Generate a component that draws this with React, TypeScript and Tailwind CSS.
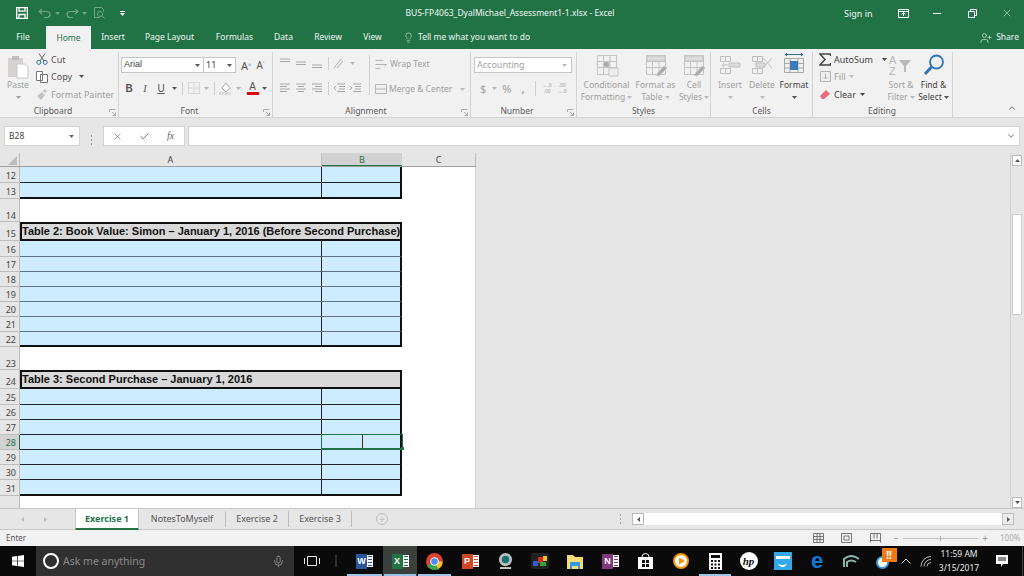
import { Check, ChevronDown, ChevronUp, Lightbulb, Mic, UserPlus, X } from "lucide-react";
import type { ReactNode } from "react";

const Caret = ({ className = "" }: { className?: string }) => (
	<svg viewBox="0 0 5 3" className={`h-[3px] w-[5px] shrink-0 ${className}`} fill="currentColor">
		<path d="M0 0h5L2.5 3z" />
	</svg>
);

const Launcher = () => (
	<svg viewBox="0 0 7 7" className="h-[7px] w-[7px] text-[#9a9a9a]" fill="none" stroke="currentColor">
		<path d="M.5 3V.5H6.5M6.5 6.5L3 3M6.5 3.5v3h-3" strokeWidth=".8" />
	</svg>
);

function Group({
	width,
	label,
	launcher,
	labelOffset,
	children,
}: {
	width: string;
	label: string;
	launcher?: boolean;
	labelOffset?: string;
	children: ReactNode;
}) {
	return (
		<div className={`flex h-[65px] shrink-0 flex-col border-r border-[#d4d4d4] ${width}`}>
			<div className="h-[54px]">{children}</div>
			<div className="relative flex h-[11px] items-center justify-center text-[8.5px] leading-none text-[#5a5a5a]">
				<span className={labelOffset}>{label}</span>
				{launcher && (
					<span className="absolute right-[2px] top-[3px]">
						<Launcher />
					</span>
				)}
			</div>
		</div>
	);
}

// big ribbon button: icon with one or two lines of text below
function BigButton({
	width,
	lines,
	dim = true,
	icon,
}: {
	width: string;
	lines: ReactNode[];
	dim?: boolean;
	icon: ReactNode;
}) {
	return (
		<div className={`flex shrink-0 flex-col items-center ${width} ${dim ? "text-[#a0a0a0]" : "text-[#444444]"}`}>
			<div className="flex h-[25px] items-center justify-center">{icon}</div>
			<div className="mt-[2px] flex h-[12px] items-center gap-[2px] whitespace-nowrap text-[8.5px] leading-none">{lines[0]}</div>
			<div className="flex h-[12px] items-center gap-[2px] whitespace-nowrap text-[8.5px] leading-none">{lines[1]}</div>
		</div>
	);
}

const GridIcon = ({ children }: { children?: ReactNode }) => (
	<svg viewBox="0 0 24 24" className="h-[24px] w-[24px]" fill="none" stroke="#c4c4c4">
		<path d="M2.5 2.5h19v19h-19zM2.5 8.5h19M2.5 14.5h19M8.5 2.5v19M15 2.5v19" />
		{children}
	</svg>
);

const Lines = ({ d }: { d: string }) => (
	<svg viewBox="0 0 12 10" className="h-[10px] w-[12px] shrink-0" stroke="#a8a8a8" fill="none">
		<path d={d} />
	</svg>
);

const Sep = ({ className = "h-[15px]" }: { className?: string }) => (
	<div className={`w-px shrink-0 bg-[#d0d0d0] ${className}`} />
);

function Ribbon() {
	return (
		<div className="flex h-[69px] border-b border-[#d2d2d2] bg-[#f1f1f1] pt-[3px] font-['Noto_Sans',sans-serif]">
			{/* clipboard */}
			<Group width="w-[119px]" label="Clipboard" launcher labelOffset="mr-[12px]">
				<div className="flex">
					<div className="flex w-[36px] shrink-0 flex-col items-center text-[#a0a0a0]">
						<svg viewBox="0 0 22 24" className="mt-[3px] h-[24px] w-[22px]">
							<path d="M1 3h15v19H1z" fill="#d6d2d2" />
							<path d="M5 1h7v4H5z" fill="#bdbdbd" />
							<path d="M10 9h8l3 3v11H10z" fill="#fff" stroke="#c8c8c8" />
						</svg>
						<span className="text-[8.5px] leading-[12px]">Paste</span>
						<Caret className="mt-[5px]" />
					</div>
					<div className="-mt-[2px] flex flex-col text-[9px] leading-none">
						<div className="flex h-[18px] items-center gap-[3px] text-[#555555]">
							<svg viewBox="0 0 12 12" className="h-[12px] w-[12px]" fill="none" stroke="#2e6da4">
								<circle cx="2.8" cy="9.4" r="2" />
								<circle cx="9.2" cy="9.4" r="2" />
								<path d="M4 8L9 .5M8 8L3 .5" stroke="#666" />
							</svg>
							Cut
						</div>
						<div className="flex h-[17px] items-center gap-[3px] text-[#555555]">
							<svg viewBox="0 0 12 12" className="h-[12px] w-[12px]" fill="#fff" stroke="#777">
								<path d="M.5.5h6v9h-6zM4.5 3.5h7v8h-7z" />
							</svg>
							Copy
							<Caret className="ml-[4px]" />
						</div>
						<div className="flex h-[18px] items-center gap-[3px] text-[#a0a0a0]">
							<svg viewBox="0 0 12 12" className="h-[12px] w-[12px]" fill="#c4c4c4">
								<path d="M1 8l5-4 3 3-4 5zM7 3l2-2 2 2-2 2z" />
							</svg>
							Format Painter
						</div>
					</div>
				</div>
			</Group>

			{/* font */}
			<Group width="w-[154px]" label="Font" launcher labelOffset="mr-[12px]">
				<div className="pt-[5px]">
					<div className="flex h-[16px] items-center pl-[2px]">
						<div className="flex h-[16px] w-[83px] items-center justify-between border border-[#c6c6c6] bg-white pl-[2px] pr-[3px] font-['Liberation_Sans',sans-serif] text-[9px] text-[#444444]">
							Arial <Caret className="text-[#555]" />
						</div>
						<div className="flex h-[16px] w-[32px] items-center justify-between border border-l-0 border-[#c6c6c6] bg-white pl-[2px] pr-[3px] text-[9px] text-[#444444]">
							11 <Caret className="text-[#555]" />
						</div>
						<span className="ml-[5px] text-[11px] leading-none text-[#555]">
							A<sup className="text-[6px] text-[#2e6da4]">^</sup>
						</span>
						<span className="ml-[5px] text-[10px] leading-none text-[#555]">
							A<sup className="text-[6px] text-[#2e6da4]">˅</sup>
						</span>
					</div>
					<div className="mt-[7px] flex h-[16px] items-center text-[#555]">
						<span className="ml-[2px] w-[16px] text-center font-['Liberation_Sans',sans-serif] text-[10px] font-bold">B</span>
						<span className="w-[16px] text-center font-['Liberation_Serif',serif] text-[10px] italic">I</span>
						<span className="w-[16px] text-center font-['Liberation_Sans',sans-serif] text-[10px] underline">U</span>
						<Caret className="ml-[3px]" />
						<Sep className="ml-[5px] h-[13px]" />
						<svg viewBox="0 0 12 12" className="ml-[5px] h-[12px] w-[12px]" fill="none" stroke="#c4bcc4" strokeDasharray="1 1">
							<path d="M.5.5h11v11H.5zM6 .5v11M.5 6h11" />
						</svg>
						<Caret className="ml-[4px] text-[#bbb]" />
						<Sep className="ml-[5px] h-[13px]" />
						<svg viewBox="0 0 14 14" className="ml-[4px] h-[14px] w-[14px]">
							<path d="M3 7l4-5 4 5-4 4z" fill="#fff" stroke="#aaa" />
							<path d="M0 11h12v3H0z" fill="#dcdcdc" />
						</svg>
						<Caret className="ml-[3px] text-[#bbb]" />
						<div className="ml-[5px] flex w-[13px] flex-col items-center">
							<span className="font-['Liberation_Sans',sans-serif] text-[10px] leading-[10px]">A</span>
							<span className="h-[3px] w-[12px] bg-[#e3000f]" />
						</div>
						<Caret className="ml-[3px]" />
					</div>
				</div>
			</Group>

			{/* alignment */}
			<Group width="w-[198px]" label="Alignment" launcher labelOffset="mr-[11px]">
				<div className="flex">
					<div className="flex w-[96px] shrink-0 flex-col">
						<div className="flex h-[20px] items-center gap-[4px] pl-[6px] pt-[2px]">
							<Lines d="M1 1h10M1 3.5h10" />
							<Lines d="M1 4h10M1 6.5h10" />
							<Lines d="M1 7h10M1 9.500h10" />
							<Sep className="ml-[1px] h-[13px]" />
							<svg viewBox="0 0 12 12" className="h-[12px] w-[12px]" stroke="#b0b0b0" fill="none">
								<path d="M1 11L8 2M4 11l6-7" />
							</svg>
							<Caret className="ml-[1px] text-[#bbb]" />
						</div>
						<div className="mt-[8px] flex h-[16px] items-center gap-[4px] pl-[6px]">
							<Lines d="M1 1h10M1 3.500h7M1 6h10M1 8.500h7" />
							<Lines d="M1 1h10M3 3.500h6M1 6h10M3 8.500h6" />
							<Lines d="M1 1h10M4 3.500h7M1 6h10M4 8.500h7" />
							<Sep className="ml-[1px] h-[13px]" />
							<Lines d="M4 1h8M6 3.500h6M6 6h6M4 8.500h8M3 3L1 5l2 2" />
							<Lines d="M4 1h8M6 3.500h6M6 6h6M4 8.500h8M1 3l2 2-2 2" />
						</div>
					</div>
					<Sep className="mt-[3px] h-[40px]" />
					<div className="flex flex-col whitespace-nowrap pl-[5px] text-[8.5px] leading-none text-[#a0a0a0]">
						<div className="flex h-[20px] items-center gap-[2px] pt-[5px]">
							<svg viewBox="0 0 13 12" className="h-[12px] w-[13px] shrink-0" fill="none" stroke="#b4b4b4">
								<path d="M.5 1.500h8M.5 5.500h11l-2 2M.5 9.500h5" />
							</svg>
							Wrap Text
						</div>
						<div className="mt-[9px] flex h-[16px] items-center gap-[2px]">
							<svg viewBox="0 0 12 12" className="h-[12px] w-[12px] shrink-0" fill="none" stroke="#b4b4b4">
								<path d="M.5 1.500h11v9H.5zM.5 6h3M8.500 6h3M3.500 6h5" />
							</svg>
							Merge & Center
							<Caret className="ml-[6px] text-[#bbb]" />
						</div>
					</div>
				</div>
			</Group>

			{/* number */}
			<Group width="w-[106px]" label="Number" launcher labelOffset="mr-[13px]">
				<div className="pl-[3px] pt-[5px]">
					<div className="flex h-[16px] w-[98px] items-center justify-between border border-[#c6c6c6] bg-white pl-[2px] pr-[4px] text-[9px] text-[#a0a0a0]">
						Accounting <Caret className="text-[#bbb]" />
					</div>
					<div className="mt-[7px] flex h-[16px] items-center text-[#a0a0a0]">
						<span className="ml-[6px] text-[11px] leading-none">$</span>
						<Caret className="ml-[6px] text-[#bbb]" />
						<span className="ml-[5px] text-[11px] leading-none">%</span>
						<span className="ml-[10px] text-[11px] font-bold leading-none">,</span>
						<Sep className="ml-[10px] h-[15px]" />
						<span className="ml-[5px] w-[13px] text-center text-[5px] leading-[6px]">
							←.0
							<br />
							.00
						</span>
						<span className="ml-[2px] w-[13px] text-center text-[5px] leading-[6px]">
							.00
							<br />
							→.0
						</span>
					</div>
				</div>
			</Group>

			{/* styles */}
			<Group width="w-[134px]" label="Styles">
				<div className="flex pl-[2px]">
					<BigButton
						width="w-[55px]"
						lines={["Conditional", <>Formatting <Caret className="text-[#bbb]" /></>]}
						icon={<GridIcon><path d="M9 9h5v5H9z" fill="#a8a8a8" /><path d="M14 15h9v8h-9z" fill="#eee" /></GridIcon>}
					/>
					<BigButton
						width="w-[43px]"
						lines={["Format as", <>Table <Caret className="text-[#bbb]" /></>]}
						icon={<GridIcon><path d="M3 3h18v5H3z" fill="#ddd" /><path d="M12 22l8-9 3 2-8 8z" fill="#aaa" /></GridIcon>}
					/>
					<BigButton
						width="w-[34px]"
						lines={["Cell", <>Styles <Caret className="text-[#bbb]" /></>]}
						icon={<GridIcon><path d="M3 3h18v5H3z" fill="#ddd" /><path d="M12 22l8-9 3 2-8 8z" fill="#aaa" /></GridIcon>}
					/>
				</div>
			</Group>

			{/* cells */}
			<Group width="w-[102px]" label="Cells">
				<div className="flex pl-[3px]">
					<BigButton
						width="w-[32px]"
						lines={["Insert", <Caret className="text-[#bbb]" />]}
						icon={
							<svg viewBox="0 0 22 20" className="h-[20px] w-[22px]" fill="none" stroke="#bfbfbf">
								<path d="M1.500 1.500h10v5h-10zM1.500 13.500h10v5h-10zM6.500 1.500v5M6.500 13.500v5M3 10h6M5 8l-2 2 2 2" />
								<path d="M10 8h11v4H10z" fill="#dcdcdc" />
							</svg>
						}
					/>
					<BigButton
						width="w-[32px]"
						lines={["Delete", <Caret className="text-[#bbb]" />]}
						icon={
							<svg viewBox="0 0 22 20" className="h-[20px] w-[22px]" fill="none" stroke="#bfbfbf">
								<path d="M1.500 1.500h10v5h-10zM1.500 13.500h10v5h-10zM6.500 1.500v5M6.500 13.500v5M12 3l9 10M21 3l-9 10" />
								<path d="M5 8h9v4H5z" fill="#dcdcdc" />
							</svg>
						}
					/>
					<BigButton
						width="w-[32px]"
						dim={false}
						lines={["Format", <Caret className="text-[#555]" />]}
						icon={
							<svg viewBox="0 0 22 24" className="h-[24px] w-[22px]" fill="none" stroke="#a8a8a8">
								<path d="M1.500 5.500h19v14h-19zM1.500 10.500h19M1.500 15h19M7 5.500v14M15 5.500v14" />
								<path d="M7 8h8v9H7z" fill="#3d7ab8" stroke="none" />
								<path d="M2 1.500h18M4 0L2 1.500 4 3M18 0l2 1.500L18 3" stroke="#2e6da4" />
							</svg>
						}
					/>
				</div>
			</Group>

			{/* editing */}
			<Group width="w-[140px]" label="Editing" labelOffset="mr-[1px]">
				<div className="flex">
					<div className="-mt-[2px] flex w-[72px] shrink-0 flex-col pl-[6px] text-[9px] leading-none">
						<div className="flex h-[18px] items-center gap-[3px] text-[#444]">
							<svg viewBox="0 0 12 13" className="h-[13px] w-[12px] shrink-0" fill="none" stroke="#444" strokeWidth="1.500">
								<path d="M11.500 3V1H1l5 5.500L1 12h10.500v-2" />
							</svg>
							AutoSum
							<Caret className="ml-[6px]" />
						</div>
						<div className="flex h-[17px] items-center gap-[3px] pl-[1px] text-[#a0a0a0]">
							<svg viewBox="0 0 11 11" className="h-[11px] w-[11px] shrink-0" fill="#eee" stroke="#b4b4b4">
								<path d="M.5.5h10v10H.5zM5.500 3v5M3.500 6l2 2 2-2" />
							</svg>
							<span>Fill</span>
							<Caret className="text-[#bbb]" />
						</div>
						<div className="flex h-[18px] items-center gap-[3px] pl-[1px] text-[#444]">
							<svg viewBox="0 0 11 11" className="h-[11px] w-[11px] shrink-0" fill="#e56c7d">
								<path d="M0 7l6-6 4 4-6 5H2z" />
							</svg>
							<span>Clear</span>
							<Caret className="ml-[1px]" />
						</div>
					</div>
					<BigButton
						width="w-[32px]"
						lines={["Sort &", <>Filter <Caret className="text-[#bbb]" /></>]}
						icon={
							<svg viewBox="0 0 24 22" className="h-[22px] w-[24px]" fill="#b8b8b8">
								<text x="0" y="10" fontSize="11" fontFamily="Liberation Sans">A</text>
								<text x="0" y="21" fontSize="11" fontFamily="Liberation Sans">Z</text>
								<path d="M10 6h12l-5 6v6h-2v-6z" />
							</svg>
						}
					/>
					<BigButton
						width="w-[33px]"
						dim={false}
						lines={["Find &", <>Select <Caret className="text-[#555]" /></>]}
						icon={
							<svg viewBox="0 0 22 22" className="h-[22px] w-[22px]" fill="none" stroke="#2e75b6" strokeWidth="1.800">
								<circle cx="13.500" cy="8" r="6.500" />
								<path d="M8.500 13L2 20" strokeWidth="3" />
							</svg>
						}
					/>
				</div>
			</Group>
			<div className="flex flex-1 items-end justify-end pb-[4px] pr-[7px]">
				<ChevronUp size={10} strokeWidth={2} className="text-[#555]" />
			</div>
		</div>
	);
}

function TitleBar() {
	return (
		<div className="flex h-[26px] items-center bg-[#217346] font-['Noto_Sans',sans-serif] text-[#f2f7f4]">
			<svg viewBox="0 0 12 12" className="ml-[16px] h-[12px] w-[12px]" fill="none" stroke="#fff" strokeWidth="1.300">
				<path d="M.7.7h10.600v10.600H.7zM3 .7v3.500h6V.7M3 11.300V7.500h6v3.800" />
			</svg>
			<svg viewBox="0 0 14 10" className="ml-[10px] h-[10px] w-[14px]" fill="none" stroke="#6fa588" strokeWidth="1.200">
				<path d="M4 1L1 3.500 4 6M1 3.500h8a3 3 0 010 6H6" />
			</svg>
			<Caret className="ml-[3px] text-[#6fa588]" />
			<svg viewBox="0 0 14 10" className="ml-[5px] h-[10px] w-[14px]" fill="none" stroke="#6fa588" strokeWidth="1.200">
				<path d="M10 1l3 2.500L10 6M13 3.500H5a3 3 0 000 6h3" />
			</svg>
			<Caret className="ml-[3px] text-[#6fa588]" />
			<svg viewBox="0 0 11 12" className="ml-[7px] h-[12px] w-[11px]" fill="none" stroke="#6fa588">
				<path d="M7.500.5h-7v10h5M7.500.5l2 2v2" />
				<circle cx="6" cy="7" r="2.500" />
				<path d="M8 9l2.500 2.500" />
			</svg>
			<div className="ml-[15px] flex flex-col items-center gap-[1px]">
				<span className="h-px w-[5px] bg-white" />
				<Caret className="text-white" />
			</div>
			<span className="ml-[278px] w-[214px] whitespace-nowrap text-center text-[8.5px] leading-none">
				BUS-FP4063_DyalMichael_Assessment1-1.xlsx  -  Excel
			</span>
			<span className="ml-[227px] text-[9px] leading-none">Sign in</span>
			<svg viewBox="0 0 11 9" className="ml-[25px] h-[9px] w-[11px]" fill="none" stroke="#fff">
				<path d="M.5.500h10v8H.5zM.5 2.500h10M3.500 5.500l2-2 2 2M5.500 4v3" />
			</svg>
			<span className="ml-[24px] h-px w-[8px] bg-white" />
			<svg viewBox="0 0 9 9" className="ml-[27px] h-[9px] w-[9px]" fill="none" stroke="#fff">
				<path d="M.5 2.500h6v6h-6zM2.500 2.500v-2h6v6h-2" />
			</svg>
			<X size={12} strokeWidth={1} className="ml-[24px]" />
		</div>
	);
}

function TabRow() {
	const tabs: [string, string][] = [
		["Insert", "w-[44px]"],
		["Page Layout", "w-[69px]"],
		["Formulas", "w-[61px]"],
		["Data", "w-[37px]"],
		["Review", "w-[52px]"],
		["View", "w-[37px]"],
	];
	return (
		<div className="flex h-[23px] items-end bg-[#217346] font-['Noto_Sans',sans-serif] text-[8.5px] text-[#eef4f0]">
			<div className="flex h-[23px] w-[46px] items-center justify-center">File</div>
			<div className="flex h-[23px] w-[45px] items-center justify-center bg-[#f1f1f1] pt-[1px] text-[#217346]">Home</div>
			{tabs.map(([name, w]) => (
				<div key={name} className={`flex h-[23px] items-center justify-center ${w}`}>
					{name}
				</div>
			))}
			<div className="flex h-[23px] items-center gap-[4px] pl-[12px]">
				<Lightbulb size={11} strokeWidth={1.200} />
				Tell me what you want to do
			</div>
			<div className="ml-auto flex h-[23px] items-center gap-[4px] pr-[5px]">
				<UserPlus size={12} strokeWidth={1.200} />
				Share
			</div>
		</div>
	);
}

function FormulaBar() {
	return (
		<div className="flex h-[35px] bg-[#e6e6e6] pl-[4px] pr-[4px] pt-[8px] font-['Noto_Sans',sans-serif]">
			<div className="flex h-[20px] w-[76px] items-center justify-between border border-[#d4d4d4] bg-white pl-[4px] pr-[5px] text-[8.5px] text-[#444]">
				B28 <Caret className="text-[#666]" />
			</div>
			<div className="flex w-[23px] flex-col items-center justify-center gap-[2px]">
				<span className="h-[2px] w-px bg-[#999]" />
				<span className="h-[2px] w-px bg-[#999]" />
				<span className="h-[2px] w-px bg-[#999]" />
			</div>
			<div className="flex h-[20px] w-[82px] items-center border border-[#d4d4d4] bg-white text-[#666]">
				<X size={11} strokeWidth={1.300} className="ml-[8px]" />
				<Check size={11} strokeWidth={2} className="ml-[16px]" />
				<span className="ml-[17px] font-['Liberation_Serif',serif] text-[10px] italic leading-none">fx</span>
			</div>
			<div className="ml-[3px] flex h-[20px] flex-1 items-center justify-end border border-[#d4d4d4] bg-white pr-[3px]">
				<ChevronDown size={10} strokeWidth={2} className="text-[#555]" />
			</div>
		</div>
	);
}

const rowLabel = "flex w-[20px] shrink-0 justify-end border-b border-r border-[#bdbdbd] pr-[3px]";

function Row({
	n,
	height = "h-[15px]",
	selected,
	line = "border-b-[#222222]",
	last,
}: {
	n: number;
	height?: string;
	selected?: boolean;
	line?: string;
	last?: boolean;
}) {
	const edge = last ? "border-b-2 border-b-[#111111]" : `border-b ${line}`;
	return (
		<div className={`flex ${height}`}>
			<div className={`${rowLabel} items-center pt-[1px] ${selected ? "border-r-[#217346] bg-[#d2d2d2] text-[#217346]" : "bg-[#e6e6e6] text-[#444]"}`}>{n}</div>
			<div className={`w-[302px] border-r border-r-[#222222] bg-[#cdecff] ${edge}`} />
			<div className={`relative w-[80px] border-r-2 border-r-[#111111] bg-[#cdecff] ${edge}`}>
				{selected && (
					<div className="absolute -bottom-[1px] -left-px -right-[3px] -top-[1px] border border-b-2 border-[#217346]">
						<span className="absolute bottom-0 left-[40px] top-0 w-px bg-[#5a2a10]" />
						<span className="absolute -bottom-[2px] -right-[2px] h-[3px] w-[3px] bg-[#217346]" />
					</div>
				)}
			</div>
			<div className="w-[73px] bg-white" />
			<div className="w-px bg-[#d4d4d4]" />
		</div>
	);
}

function BlankRow({ n, height, pad }: { n: number; height: string; pad: string }) {
	return (
		<div className={`flex ${height}`}>
			<div className={`${rowLabel} items-end bg-[#e6e6e6] text-[#444] ${pad}`}>{n}</div>
			<div className="w-[455px] bg-white" />
			<div className="w-px bg-[#d4d4d4]" />
		</div>
	);
}

function HeaderRow({ n, title }: { n: number; title: string }) {
	return (
		<div className="flex h-[19px]">
			<div className={`${rowLabel} items-end bg-[#e6e6e6] pb-[2px] text-[#444]`}>{n}</div>
			<div className="flex w-[382px] items-center whitespace-nowrap border-2 border-[#111111] bg-[#d9d9d9] font-['Liberation_Sans',sans-serif] text-[11px] font-bold leading-none text-[#111]">
				{title}
			</div>
			<div className="w-[73px] bg-white" />
			<div className="w-px bg-[#d4d4d4]" />
		</div>
	);
}

function Sheet() {
	const soft = "border-b-[#5f7482]";
	return (
		<div className="flex h-[355px] bg-[#e6e6e6] font-['Noto_Sans',sans-serif] text-[9px] leading-none">
			<div className="w-[476px] shrink-0">
				<div className="flex h-[14px] border-b border-[#9f9f9f] text-[#444]">
					<div className="flex w-[20px] items-end justify-end border-r border-[#bdbdbd] pb-[1px] pr-[2px]">
						<svg viewBox="0 0 9 9" className="h-[9px] w-[9px]" fill="#bcbcbc">
							<path d="M9 0v9H0z" />
						</svg>
					</div>
					<div className="flex w-[302px] items-center justify-center border-r border-[#bdbdbd]">A</div>
					<div className="flex w-[80px] items-center justify-center border-b border-[#217346] bg-[#d2d2d2] text-[#217346]">B</div>
					<div className="flex w-[74px] items-center justify-center border-r border-[#bdbdbd]">C</div>
				</div>
				<Row n={12} height="h-[16px]" />
				<Row n={13} height="h-[16px]" last />
				<BlankRow n={14} height="h-[23px]" pad="pb-[1px]" />
				<HeaderRow n={15} title="Table 2: Book Value: Simon – January 1, 2016 (Before Second Purchase)" />
				<Row n={16} height="h-[16px]" line={soft} />
				<Row n={17} line={soft} />
				<Row n={18} line={soft} />
				<Row n={19} line={soft} />
				<Row n={20} line={soft} />
				<Row n={21} line={soft} />
				<Row n={22} last />
				<BlankRow n={23} height="h-[23px]" pad="pb-[1px]" />
				<HeaderRow n={24} title="Table 3: Second Purchase – January 1, 2016" />
				<Row n={25} height="h-[16px]" />
				<Row n={26} />
				<Row n={27} />
				<Row n={28} selected />
				<Row n={29} />
				<Row n={30} />
				<Row n={31} height="h-[16px]" last />
				<div className="flex h-[12px]">
					<div className="w-[20px] border-r border-[#bdbdbd]" />
					<div className="w-[455px] bg-white" />
					<div className="w-px bg-[#d4d4d4]" />
				</div>
			</div>
			<div className="flex-1" />
			<div className="flex w-[14px] shrink-0 flex-col border-l border-[#d0d0d0] pl-px pr-[2px]">
				<div className="mt-[2px] flex h-[11px] items-center justify-center border border-[#bbb] bg-white text-[#555]">
					<Caret className="rotate-180" />
				</div>
				<div className="mt-[48px] h-[101px] border border-[#d0d0d0] bg-white" />
				<div className="flex-1" />
				<div className="flex h-[11px] items-center justify-center border border-[#bbb] bg-white text-[#555]">
					<Caret />
				</div>
			</div>
		</div>
	);
}

function SheetTabs() {
	return (
		<div className="flex h-[22px] items-stretch border-y border-[#c8c8c8] bg-[#e6e6e6] font-['Noto_Sans',sans-serif] text-[9px] text-[#555]">
			<div className="flex w-[75px] items-center gap-[18px] pl-[20px] text-[#bbb]">
				<Caret className="rotate-90" />
				<Caret className="-rotate-90" />
			</div>
			<div className="flex h-[21px] w-[64px] items-center justify-center border-x border-b-2 border-[#c8c8c8] border-b-[#217346] bg-white font-bold text-[#217346]">Exercise 1</div>
			<div className="my-[2px] flex w-[87px] items-center justify-center border-r border-[#bdbdbd]">NotesToMyself</div>
			<div className="my-[2px] flex w-[63px] items-center justify-center border-r border-[#bdbdbd]">Exercise 2</div>
			<div className="my-[2px] flex w-[63px] items-center justify-center border-r border-[#bdbdbd]">Exercise 3</div>
			<div className="ml-[24px] flex items-center">
				<div className="flex h-[12px] w-[12px] items-center justify-center rounded-full border border-[#bdbdbd] text-[10px] leading-none text-[#bdbdbd]">+</div>
			</div>
			<div className="ml-[232px] flex flex-col items-center justify-center gap-[2px]">
				<span className="h-[2px] w-px bg-[#aaa]" />
				<span className="h-[2px] w-px bg-[#aaa]" />
				<span className="h-[2px] w-px bg-[#aaa]" />
			</div>
			<div className="ml-[11px] flex w-[382px] items-center py-[4px]">
				<div className="flex h-full w-[12px] items-center justify-center border border-[#bbb] bg-white text-[#555]">
					<Caret className="rotate-90" />
				</div>
				<div className="h-full flex-1 bg-white" />
				<div className="flex h-full w-[12px] items-center justify-center border border-[#bbb] bg-[#ececec] text-[#555]">
					<Caret className="-rotate-90" />
				</div>
			</div>
		</div>
	);
}

function StatusBar() {
	return (
		<div className="flex h-[16px] items-center bg-[#f1f1f1] pl-[6px] font-['Noto_Sans',sans-serif] text-[8px] text-[#555]">
			Enter
			<svg viewBox="0 0 11 10" className="ml-auto h-[10px] w-[11px]" fill="none" stroke="#777">
				<path d="M.5.500h10v9H.5zM.5 3.500h10M.5 6.500h10M4 .5v9M7 .5v9" />
			</svg>
			<svg viewBox="0 0 11 10" className="ml-[17px] h-[10px] w-[11px]" fill="none" stroke="#777">
				<path d="M.5.500h10v9H.5zM3 3h5v4H3z" />
			</svg>
			<svg viewBox="0 0 11 10" className="ml-[18px] h-[10px] w-[11px]" fill="none" stroke="#777">
				<path d="M.5 9.500V.5h10v9M.5 7.500h10M4 .5v5M7 .5v5" />
			</svg>
			<span className="ml-[13px] h-px w-[4px] bg-[#aaa]" />
			<div className="relative ml-[5px] h-px w-[75px] bg-[#c0c0c0]">
				<span className="absolute left-[37px] top-[-2px] h-[5px] w-px bg-[#aaa]" />
			</div>
			<span className="ml-[4px] text-[10px] leading-none text-[#999]">+</span>
			<span className="ml-[12px] w-[24px] text-[8px] text-[#aaa]">100%</span>
		</div>
	);
}

// office style tile: letter square over a striped page
function Tile({ bg, letter, stripe }: { bg: string; letter: string; stripe: string }) {
	return (
		<div className="relative flex h-[15px] w-[17px] items-center">
			<div className={`z-10 flex h-[15px] w-[11px] items-center justify-center ${bg}`}>
				<span className="font-['Liberation_Sans',sans-serif] text-[9px] font-bold leading-none text-white">{letter}</span>
			</div>
			<div className="flex h-[12px] w-[6px] flex-col justify-between bg-white py-[1px] pl-[1px]">
				<span className={`h-px w-[4px] ${stripe}`} />
				<span className={`h-px w-[4px] ${stripe}`} />
				<span className={`h-px w-[4px] ${stripe}`} />
				<span className={`h-px w-[4px] ${stripe}`} />
			</div>
		</div>
	);
}

function TaskIcon({ width, active, open, children }: { width: string; active?: boolean; open?: boolean; children: ReactNode }) {
	return (
		<div className={`relative flex h-[30px] shrink-0 items-center justify-center ${width} ${active ? "bg-[#3a3f3c]" : ""}`}>
			{children}
			{open && <span className="absolute bottom-0 left-[1px] right-[1px] h-[2px] bg-[#9fc3e8]" />}
		</div>
	);
}

function Taskbar() {
	return (
		<div className="flex h-[30px] items-center bg-[#0a0a0a] font-['Noto_Sans',sans-serif] text-white">
			<div className="flex w-[36px] shrink-0 justify-center">
				<svg viewBox="0 0 12 12" className="h-[12px] w-[12px]" fill="#fff">
					<path d="M0 1.700L5 1v4.700H0zM5.700.9L12 0v5.700H5.700zM0 6.300h5V11l-5-.7zM5.700 6.300H12V12l-6.300-.9z" />
				</svg>
			</div>
			<div className="flex h-[30px] w-[258px] shrink-0 items-center bg-[#303030] pl-[7px] text-[10.500px] text-[#8a8a8a]">
				<span className="h-[16px] w-[16px] rounded-full border-[2px] border-white" />
				<span className="ml-[4px] pt-[1px]">Ask me anything</span>
				<Mic size={13} strokeWidth={1.200} className="ml-auto mr-[9px] text-[#b0b0b0]" />
			</div>
			<div className="flex w-[36px] shrink-0 justify-center">
				<svg viewBox="0 0 16 10" className="h-[10px] w-[16px]" fill="none" stroke="#e8e8e8">
					<path d="M3.500.5h9v9h-9zM.5 2v6M15.500 2v6" />
				</svg>
			</div>
			<span className="ml-[5px] h-[12px] w-[2px] shrink-0 bg-[#2e2e2e]" />
			<div className="ml-[9px] flex">
				<TaskIcon width="w-[37px]" open><Tile bg="bg-[#2b579a]" letter="W" stripe="bg-[#2b579a]" /></TaskIcon>
				<TaskIcon width="w-[34px]" active open><Tile bg="bg-[#217346]" letter="X" stripe="bg-[#217346]" /></TaskIcon>
				<TaskIcon width="w-[35px]" open>
					<svg viewBox="0 0 16 16" className="h-[17px] w-[17px]">
						<circle cx="8" cy="8" r="8" fill="#e0412f" />
						<path d="M8 8L1 12a8 8 0 0011 3z" fill="#37a24a" />
						<path d="M8 8h7.500a8 8 0 01-4 7z" fill="#f7c51d" />
						<circle cx="8" cy="8" r="3.600" fill="#4a8cf0" stroke="#fff" />
					</svg>
				</TaskIcon>
				<TaskIcon width="w-[36px]"><Tile bg="bg-[#d24726]" letter="P" stripe="bg-[#d24726]" /></TaskIcon>
				<TaskIcon width="w-[34px]">
					<svg viewBox="0 0 16 17" className="h-[16px] w-[15px]">
						<circle cx="8" cy="7" r="7" fill="#b8c0c0" />
						<circle cx="8" cy="7" r="4" fill="#1f6f70" />
						<path d="M2 15h12v2H2z" fill="#d0d0d0" />
					</svg>
				</TaskIcon>
				<TaskIcon width="w-[35px]">
					<svg viewBox="0 0 18 16" className="h-[16px] w-[18px]">
						<rect width="18" height="16" rx="2" fill="#222" />
						<path d="M2 8h5v5H2z" fill="#2c5fd0" />
						<path d="M7 4h5v6H7z" fill="#d8262c" />
						<path d="M12 3h4v5h-4z" fill="#e8c81e" />
						<path d="M9 9h6v4H9z" fill="#38a03c" />
					</svg>
				</TaskIcon>
				<TaskIcon width="w-[36px]">
					<svg viewBox="0 0 16 15" className="h-[15px] w-[16px]">
						<path d="M0 1h6l2 2h8v12H0z" fill="#f6d978" />
						<path d="M3 8h10v7h-2v-3H5v3H3z" fill="#2f9ae0" />
					</svg>
				</TaskIcon>
				<TaskIcon width="w-[35px]"><Tile bg="bg-[#80397b]" letter="N" stripe="bg-[#80397b]" /></TaskIcon>
				<TaskIcon width="w-[35px]">
					<svg viewBox="0 0 15 16" className="h-[16px] w-[15px]">
						<path d="M0 4h15v12H0z" fill="#fff" />
						<path d="M4 4a3.500 3.500 0 017 0" fill="none" stroke="#fff" />
						<path d="M4 7h3v3H4zM8 7h3v3H8zM4 11h3v3H4zM8 11h3v3H8z" fill="#111" />
					</svg>
				</TaskIcon>
				<TaskIcon width="w-[35px]">
					<svg viewBox="0 0 16 16" className="h-[16px] w-[16px]">
						<circle cx="8" cy="8" r="7" fill="#fff" stroke="#f59300" strokeWidth="2" />
						<path d="M6 4.500l6 3.500-6 3.500z" fill="#f59300" />
					</svg>
				</TaskIcon>
				<TaskIcon width="w-[34px]" open>
					<svg viewBox="0 0 13 17" className="h-[17px] w-[13px]">
						<path d="M0 0h13v17H0z" fill="#fff" />
						<path d="M2 2h9v3H2zM2 7h2v2H2zM5.500 7h2v2h-2zM9 7h2v2H9zM2 10.500h2v2H2zM5.500 10.500h2v2h-2zM9 10.500h2v2H9zM2 14h2v2H2zM5.500 14h2v2h-2zM9 14h2v2H9z" fill="#111" />
					</svg>
				</TaskIcon>
				<TaskIcon width="w-[33px]">
					<div className="flex h-[18px] w-[18px] items-center justify-center rounded-full bg-white font-['Liberation_Serif',serif] text-[11px] font-bold italic leading-none text-[#111]">hp</div>
				</TaskIcon>
				<TaskIcon width="w-[35px]">
					<div className="flex h-[18px] w-[18px] flex-col items-center justify-center bg-[#33a7e8]">
						<span className="h-[3px] w-[14px] bg-white" />
						<span className="mt-[2px] h-[6px] w-[9px] rounded-b-full border-b-2 border-white" />
					</div>
				</TaskIcon>
				<TaskIcon width="w-[34px]">
					<span className="font-['Liberation_Sans',sans-serif] text-[22px] font-bold leading-none text-[#0f78d4]">e</span>
				</TaskIcon>
				<TaskIcon width="w-[34px]">
					<svg viewBox="0 0 17 13" className="h-[13px] w-[17px]" fill="none" stroke="#8ab5ad" strokeWidth="2">
						<path d="M1 12V4q7-6 15 0M4 12V7q4-3 9 0" />
					</svg>
				</TaskIcon>
				<TaskIcon width="w-[31px]">
					<div className="relative h-[16px] w-[16px]">
						<span className="absolute left-0 top-[3px] h-[13px] w-[13px] rounded-full border-2 border-[#3a9de0] bg-white" />
						<span className="absolute -right-[5px] -top-[5px] flex h-[14px] w-[15px] items-center justify-center bg-[#f07a18] text-[10px] font-bold leading-none text-white">!!</span>
					</div>
				</TaskIcon>
			</div>
			<svg viewBox="0 0 10 6" className="ml-[2px] h-[6px] w-[10px]" fill="none" stroke="#ddd">
				<path d="M.5 5.500L5 1l4.500 4.500" />
			</svg>
			<svg viewBox="0 0 12 11" className="ml-[9px] h-[11px] w-[12px]" fill="none" stroke="#bbb">
				<path d="M1 10.500a10 10 0 0110-10M4 10.500a7 7 0 017-7M7 10.500a4 4 0 014-4" />
			</svg>
			<div className="ml-[5px] flex w-[44px] shrink-0 flex-col items-center text-[8.500px] leading-[14px] text-[#e8e8e8]">
				<span>11:59 AM</span>
				<span>3/15/2017</span>
			</div>
			<svg viewBox="0 0 12 12" className="ml-[15px] h-[12px] w-[12px]" fill="#fff">
				<path d="M0 0h12v9H7l-2 3V9H0z" />
				<path d="M2 3h8M2 5h8" stroke="#111" />
			</svg>
			<span className="ml-auto mr-[1px] h-[30px] w-px bg-[#444]" />
		</div>
	);
}

export default function App() {
	return (
		<div className="flex h-[576px] w-[1024px] flex-col overflow-hidden">
			<TitleBar />
			<TabRow />
			<Ribbon />
			<FormulaBar />
			<Sheet />
			<SheetTabs />
			<StatusBar />
			<Taskbar />
		</div>
	);
}
